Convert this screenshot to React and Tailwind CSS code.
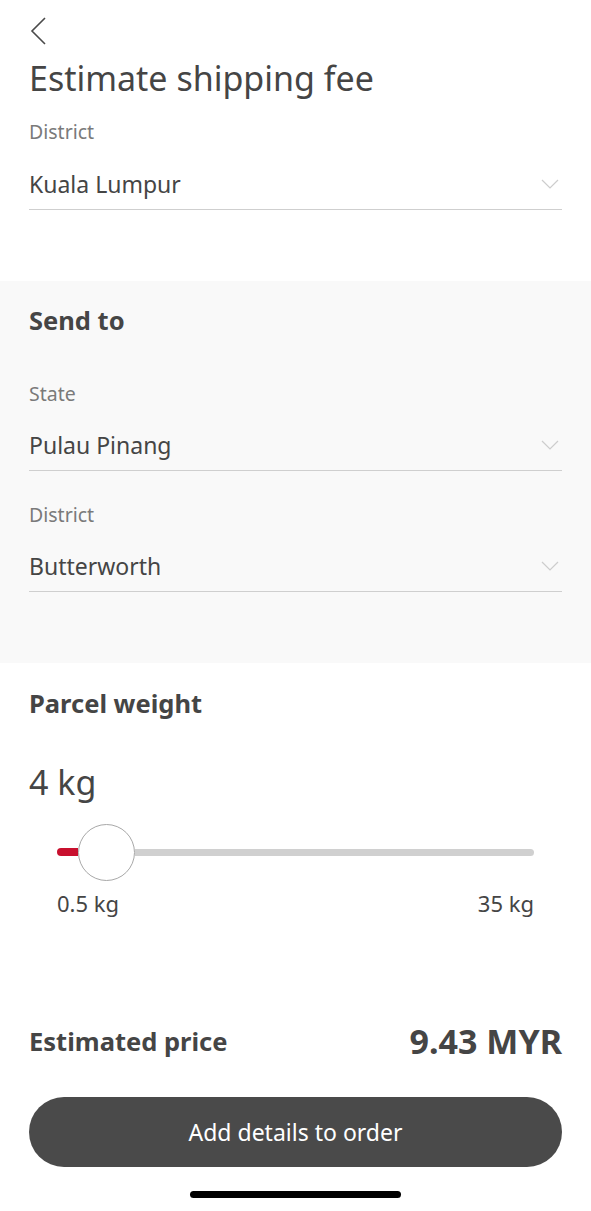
const ink = "text-[#454545]";

function Chevron() {
  return (
    <svg width="20" height="12" viewBox="0 0 20 12" fill="none">
      <path d="M2 2l8 8 8-8" stroke="#cdcdcd" strokeWidth="1.2" />
    </svg>
  );
}

function SelectField({ label, value, labelTop, valueTop }) {
  return (
    <div>
      <div className={`text-[19.5px] leading-[24px] text-[#7a7a7a] ${labelTop}`}>{label}</div>
      <div className={`flex items-center justify-between pb-[10px] border-b border-[#cfcfcf] ${valueTop}`}>
        <span className={`text-[23px] leading-[30px] ${ink}`}>{value}</span>
        <span className="mr-[2px]">
          <Chevron />
        </span>
      </div>
    </div>
  );
}

export default function App() {
  return (
    <div className={`w-[591px] min-h-[1211px] bg-white ${ink} font-['Noto_Sans',sans-serif]`}>
      <div className="px-[29px] pt-[16px]">
        <div className="h-[30px] flex items-center">
          <svg width="20" height="30" viewBox="0 0 20 30" fill="none">
            <path d="M16 2L3 15l13 13" stroke="#4a4a4a" strokeWidth="1.6" />
          </svg>
        </div>
        <h1 className="mt-[12px] text-[34px] leading-[40px] font-normal">Estimate shipping fee</h1>
        <SelectField label="District" value="Kuala Lumpur" labelTop="mt-[22px]" valueTop="mt-[25px]" />
      </div>

      <div className="mt-[71px] bg-[#f9f9f9] px-[29px] pt-[23px] pb-[71px]">
        <div className="text-[25.5px] leading-[32px] font-bold">Send to</div>
        <SelectField label="State" value="Pulau Pinang" labelTop="mt-[46px]" valueTop="mt-[24px]" />
        <SelectField label="District" value="Butterworth" labelTop="mt-[32px]" valueTop="mt-[24px]" />
      </div>

      <div className="px-[29px] pt-[24px]">
        <div className="text-[25.5px] leading-[32px] font-bold">Parcel weight</div>
        <div className="mt-[41px] text-[34px] leading-[44px]">4 kg</div>

        <div className="mt-[19px] px-[28px]">
          <div className="flex items-center h-[58px]">
            <div className="w-[21px] h-[8px] rounded-l-full bg-[#c8102e]" />
            <div className="w-[57px] h-[57px] rounded-full border border-[#a8a8a8] bg-white shrink-0" />
            <div className="flex-1 h-[7px] rounded-r-full bg-[#d0d0d0]" />
          </div>
          <div className="mt-[8px] flex justify-between text-[22px] leading-[28px]">
            <span>0.5 kg</span>
            <span>35 kg</span>
          </div>
        </div>

        <div className="mt-[102px] flex items-center justify-between">
          <span className="text-[25.5px] leading-[32px] font-bold">Estimated price</span>
          <span className="text-[34px] leading-[44px] font-bold">9.43 MYR</span>
        </div>

        <button className="mt-[34px] w-full h-[70px] rounded-full bg-[#4a4a4a] text-white text-[23px]">
          Add details to order
        </button>
      </div>

      <div className="mt-[24px] flex justify-center">
        <div className="w-[211px] h-[7px] rounded-full bg-black" />
      </div>
    </div>
  );
}
